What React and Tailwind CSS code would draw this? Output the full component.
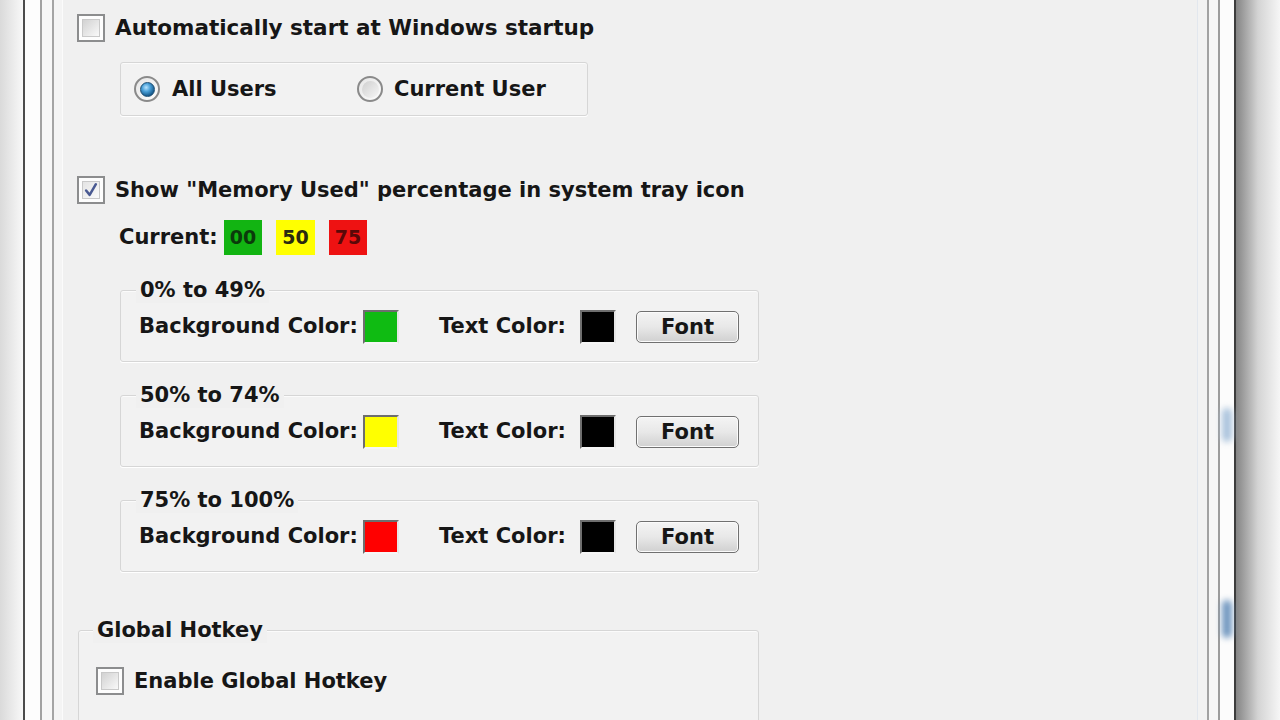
import React from "react";

const B = "font-['DejaVu_Sans',sans-serif] font-bold leading-none text-[#161616] whitespace-nowrap";
const T = B + " text-[21px]";

function Checkbox({ checked }) {
  return (
    <div className="w-[28px] h-[28px] shrink-0 border-2 border-[#8c8d8e] bg-[#fdfdfd] p-[3px]">
      <div className={"w-full h-full border border-[#c9c9c9] " + (checked ? "bg-gradient-to-br from-[#e4e4e4] to-[#fbfbfb]" : "bg-gradient-to-br from-[#d2d2d2] to-[#f9f9f9]")}>
        {checked && (
          <svg viewBox="0 0 18 18" className="w-full h-full">
            <path d="M3.5 9.5 L7.5 14.5 L14.5 2.5" fill="none" stroke="#4a5a92" strokeWidth="2.8" strokeLinejoin="round" strokeLinecap="round" />
          </svg>
        )}
      </div>
    </div>
  );
}

function Radio({ checked }) {
  return (
    <div className="w-[26px] h-[26px] shrink-0 rounded-full border-2 border-[#8a8a8a] bg-gradient-to-br from-[#e6e6e6] to-[#fdfdfd] flex items-center justify-center">
      {checked ? (
        <div className="w-[15px] h-[15px] rounded-full border border-[#1b4d73] bg-[radial-gradient(circle_at_40%_35%,#b8e4ff_0%,#4aa0d8_35%,#1a5f92_70%,#0c3a5e_100%)]" />
      ) : (
        <div className="w-[17px] h-[17px] rounded-full bg-gradient-to-br from-[#cfcfcf] to-[#f7f7f7]" />
      )}
    </div>
  );
}

function Swatch({ color }) {
  return (
    <div
      className={"w-[36px] h-[34px] shrink-0 border-2 border-t-[#6e6e6e] border-l-[#6e6e6e] border-r-[#e6e6e6] border-b-[#f6f6f6] " + color}
    />
  );
}

function FontButton() {
  return (
    <div className="ml-[20px] w-[103px] h-[32px] shrink-0 rounded-[5px] border border-[#707070] bg-gradient-to-b from-[#f4f4f4] via-[#e8e8e8] to-[#d0d0d0] shadow-[inset_0_0_0_1px_#fbfbfb] flex items-center justify-center">
      <span className={T}>Font</span>
    </div>
  );
}

function RangeGroup({ title, bg, mt }) {
  return (
    <div className={"relative shrink-0 ml-[43px] w-[639px] h-[72px] rounded-[3px] border border-[#d6d6d6] bg-[#f2f2f2] shadow-[inset_0_1px_0_#fbfbfb,0_1px_0_#ffffff] " + mt}>
      <div className="absolute left-[15px] top-[-14px] h-[26px] px-[4px] bg-[#f0f0f0] flex items-center">
        <span className={T}>{title}</span>
      </div>
      <div className="flex items-center pl-[18px] pt-[19px]">
        <div className="w-[224px] shrink-0"><span className={T}>Background Color:</span></div>
        <Swatch color={bg} />
        <div className="ml-[40px] w-[141px] shrink-0"><span className={T}>Text Color:</span></div>
        <Swatch color="bg-black" />
        <FontButton />
      </div>
    </div>
  );
}

export default function App() {
  return (
    <div className="w-[1280px] h-[720px] overflow-hidden flex bg-[#f0f0f0]">
      {/* left frame */}
      <div className="w-[23px] shrink-0 bg-gradient-to-r from-[#dadada] to-[#f8f8f8]" />
      <div className="w-[2px] shrink-0 bg-[#4c4c4c]" />
      <div className="w-[15px] shrink-0 bg-[#fdfdfd]" />
      <div className="w-[2px] shrink-0 bg-[#a2a2a2]" />
      <div className="w-[10px] shrink-0 bg-[#f7f7f7]" />
      <div className="w-[2px] shrink-0 bg-[#a4a4a4]" />
      <div className="w-[8px] shrink-0 bg-[#f4f4f4]" />
      <div className="w-[1px] shrink-0 bg-[#fbfbfb]" />

      {/* content */}
      <div className="flex-1 min-w-0 h-[720px] overflow-hidden bg-[#f0f0f0] pl-[14px] flex flex-col items-start">
        <div className="mt-[14px] h-[28px] shrink-0 flex items-center">
          <Checkbox />
          <span className={B + " text-[21.5px] ml-[10px]"}>Automatically start at Windows startup</span>
        </div>

        <div className="mt-[20px] ml-[43px] w-[468px] h-[54px] shrink-0 rounded-[3px] border border-[#d6d6d6] bg-[#f2f2f2] shadow-[inset_0_1px_0_#fbfbfb,0_1px_0_#ffffff] flex items-center pl-[13px]">
          <div className="w-[223px] flex items-center">
            <Radio checked />
            <span className={T + " ml-[12px]"}>All Users</span>
          </div>
          <div className="flex items-center">
            <Radio />
            <span className={T + " ml-[11px]"}>Current User</span>
          </div>
        </div>

        <div className="mt-[60px] h-[28px] shrink-0 flex items-center">
          <Checkbox checked />
          <span className={T + " ml-[10px]"}>Show "Memory Used" percentage in system tray icon</span>
        </div>

        <div className="mt-[16px] ml-[42px] h-[35px] shrink-0 flex items-center">
          <div className="w-[105px] shrink-0"><span className={T}>Current:</span></div>
          <div className="w-[38px] h-[35px] shrink-0 bg-[#12b412] flex items-center justify-center">
            <span className="font-['DejaVu_Sans',sans-serif] font-bold text-[19px] leading-none text-[#0b3a0b]">00</span>
          </div>
          <div className="ml-[14px] w-[39px] h-[35px] shrink-0 bg-[#ffff00] flex items-center justify-center">
            <span className="font-['DejaVu_Sans',sans-serif] font-bold text-[19px] leading-none text-[#2a2a10]">50</span>
          </div>
          <div className="ml-[14px] w-[38px] h-[35px] shrink-0 bg-[#ee1212] flex items-center justify-center">
            <span className="font-['DejaVu_Sans',sans-serif] font-bold text-[19px] leading-none text-[#5a0808]">75</span>
          </div>
        </div>

        <RangeGroup title="0% to 49%" bg="bg-[#0fbb12]" mt="mt-[35px]" />
        <RangeGroup title="50% to 74%" bg="bg-[#ffff00]" mt="mt-[33px]" />
        <RangeGroup title="75% to 100%" bg="bg-[#ff0000]" mt="mt-[33px]" />

        <div className="relative mt-[58px] ml-[1px] w-[681px] h-[140px] shrink-0 rounded-[3px] border border-[#d6d6d6] bg-[#f2f2f2] shadow-[inset_0_1px_0_#fbfbfb]">
          <div className="absolute left-[14px] top-[-14px] h-[26px] px-[4px] bg-[#f0f0f0] flex items-center">
            <span className={T}>Global Hotkey</span>
          </div>
          <div className="pl-[17px] pt-[36px] flex items-center">
            <Checkbox />
            <span className={T + " ml-[10px]"}>Enable Global Hotkey</span>
          </div>
        </div>
      </div>

      {/* right frame */}
      <div className="w-[1px] shrink-0 bg-[#e2e7ee]" />
      <div className="w-[9px] shrink-0 bg-[#f2f2f2]" />
      <div className="w-[2px] shrink-0 bg-[#a2a2a2]" />
      <div className="w-[9px] shrink-0 bg-[#f6f6f6]" />
      <div className="w-[2px] shrink-0 bg-[#9c9c9c]" />
      <div className="relative w-[14px] shrink-0 bg-[#fcfcfc]">
        <div className="absolute left-[2px] top-[408px] w-[10px] h-[34px] rounded-full bg-[#a9c2dc] blur-[3px]" />
        <div className="absolute left-[2px] top-[600px] w-[10px] h-[38px] rounded-full bg-[#6f96bf] blur-[3px]" />
      </div>
      <div className="w-[2px] shrink-0 bg-[#3c3c3c]" />
      <div className="w-[44px] shrink-0 bg-gradient-to-r from-[#858585] via-[#d4d4d4] to-[#f6f6f6]" />
    </div>
  );
}
